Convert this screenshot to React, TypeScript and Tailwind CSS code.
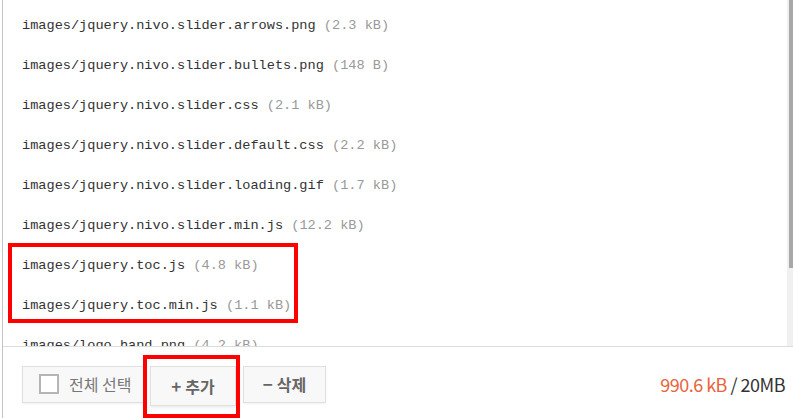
import React from 'react';

interface FileItem {
  name: string;
  size: string;
}

const files: FileItem[] = [
  { name: 'images/jquery.nivo.slider.arrows.png', size: '2.3 kB' },
  { name: 'images/jquery.nivo.slider.bullets.png', size: '148 B' },
  { name: 'images/jquery.nivo.slider.css', size: '2.1 kB' },
  { name: 'images/jquery.nivo.slider.default.css', size: '2.2 kB' },
  { name: 'images/jquery.nivo.slider.loading.gif', size: '1.7 kB' },
  { name: 'images/jquery.nivo.slider.min.js', size: '12.2 kB' },
  { name: 'images/jquery.toc.js', size: '4.8 kB' },
  { name: 'images/jquery.toc.min.js', size: '1.1 kB' },
  { name: 'images/logo_hand.png', size: '4.2 kB' },
];

const mono = "font-['Liberation_Mono','DejaVu_Sans_Mono',monospace]";
const kr = "font-['Noto_Sans_CJK_KR','Noto_Sans',sans-serif]";

export default function App() {
  return (
    <div className="relative w-[793px] h-[418px] bg-white overflow-hidden">
      <div className="ml-[2px] h-full border-l border-[#c4c4c4] flex flex-col">
        {/* file list */}
        <div className="h-[347px] flex border-b border-[#dcdcdc] overflow-hidden">
          <ul className={`flex-1 pt-[6px] pl-[19px] ${mono} text-[13.6px]`}>
            {files.map((f) => (
              <li key={f.name} className="h-[40px] flex items-center whitespace-pre">
                <span className="text-[#333]">{f.name}</span>
                <span className="text-[#999]"> ({f.size})</span>
              </li>
            ))}
          </ul>
          <div className="w-[6px] bg-[#f0f0f0] flex flex-col">
            <div className="ml-[2px] h-[268px] bg-[#a8a8a8]" />
          </div>
        </div>

        {/* footer */}
        <div className={`flex-1 flex items-center justify-between pl-[19px] pr-[8px] ${kr}`}>
          <div className="flex items-start gap-[5px] mt-[6px]">
            <button className="h-[37px] w-[123px] flex items-center gap-[10px] pl-[16px] bg-[#f8f8f8] border border-[#e0e0e0] shadow-[0_1px_2px_rgba(0,0,0,0.06)]">
              <span className="w-[20px] h-[20px] border-2 border-[#b5b5b5] bg-white" />
              <span className="text-[16px] text-[#777]">전체 선택</span>
            </button>
            <button className="h-[40px] w-[86px] flex items-center justify-center gap-[4px] bg-[#f8f8f8] border border-[#e0e0e0] shadow-[0_2px_3px_rgba(0,0,0,0.08)] text-[16px] font-bold text-[#666]">
              <span className="text-[17px]">+</span>
              <span>추가</span>
            </button>
            <button className="ml-[2px] h-[37px] w-[83px] flex items-center justify-center gap-[4px] bg-[#f8f8f8] border border-[#e0e0e0] shadow-[0_1px_2px_rgba(0,0,0,0.06)] text-[16px] font-bold text-[#666]">
              <span className="text-[17px]">−</span>
              <span>삭제</span>
            </button>
          </div>
          <div className="text-[18px] tracking-[-0.5px] mt-[4px]">
            <span className="text-[#e8643a]">990.6 kB</span>
            <span className="text-[#333]"> / 20MB</span>
          </div>
        </div>
      </div>

      {/* annotation boxes */}
      <div className="absolute left-[8px] top-[243px] w-[290px] h-[80px] border-4 border-[#f00]" />
      <div className="absolute left-[143px] top-[355px] w-[97px] h-[63px] border-4 border-[#f00]" />
    </div>
  );
}
